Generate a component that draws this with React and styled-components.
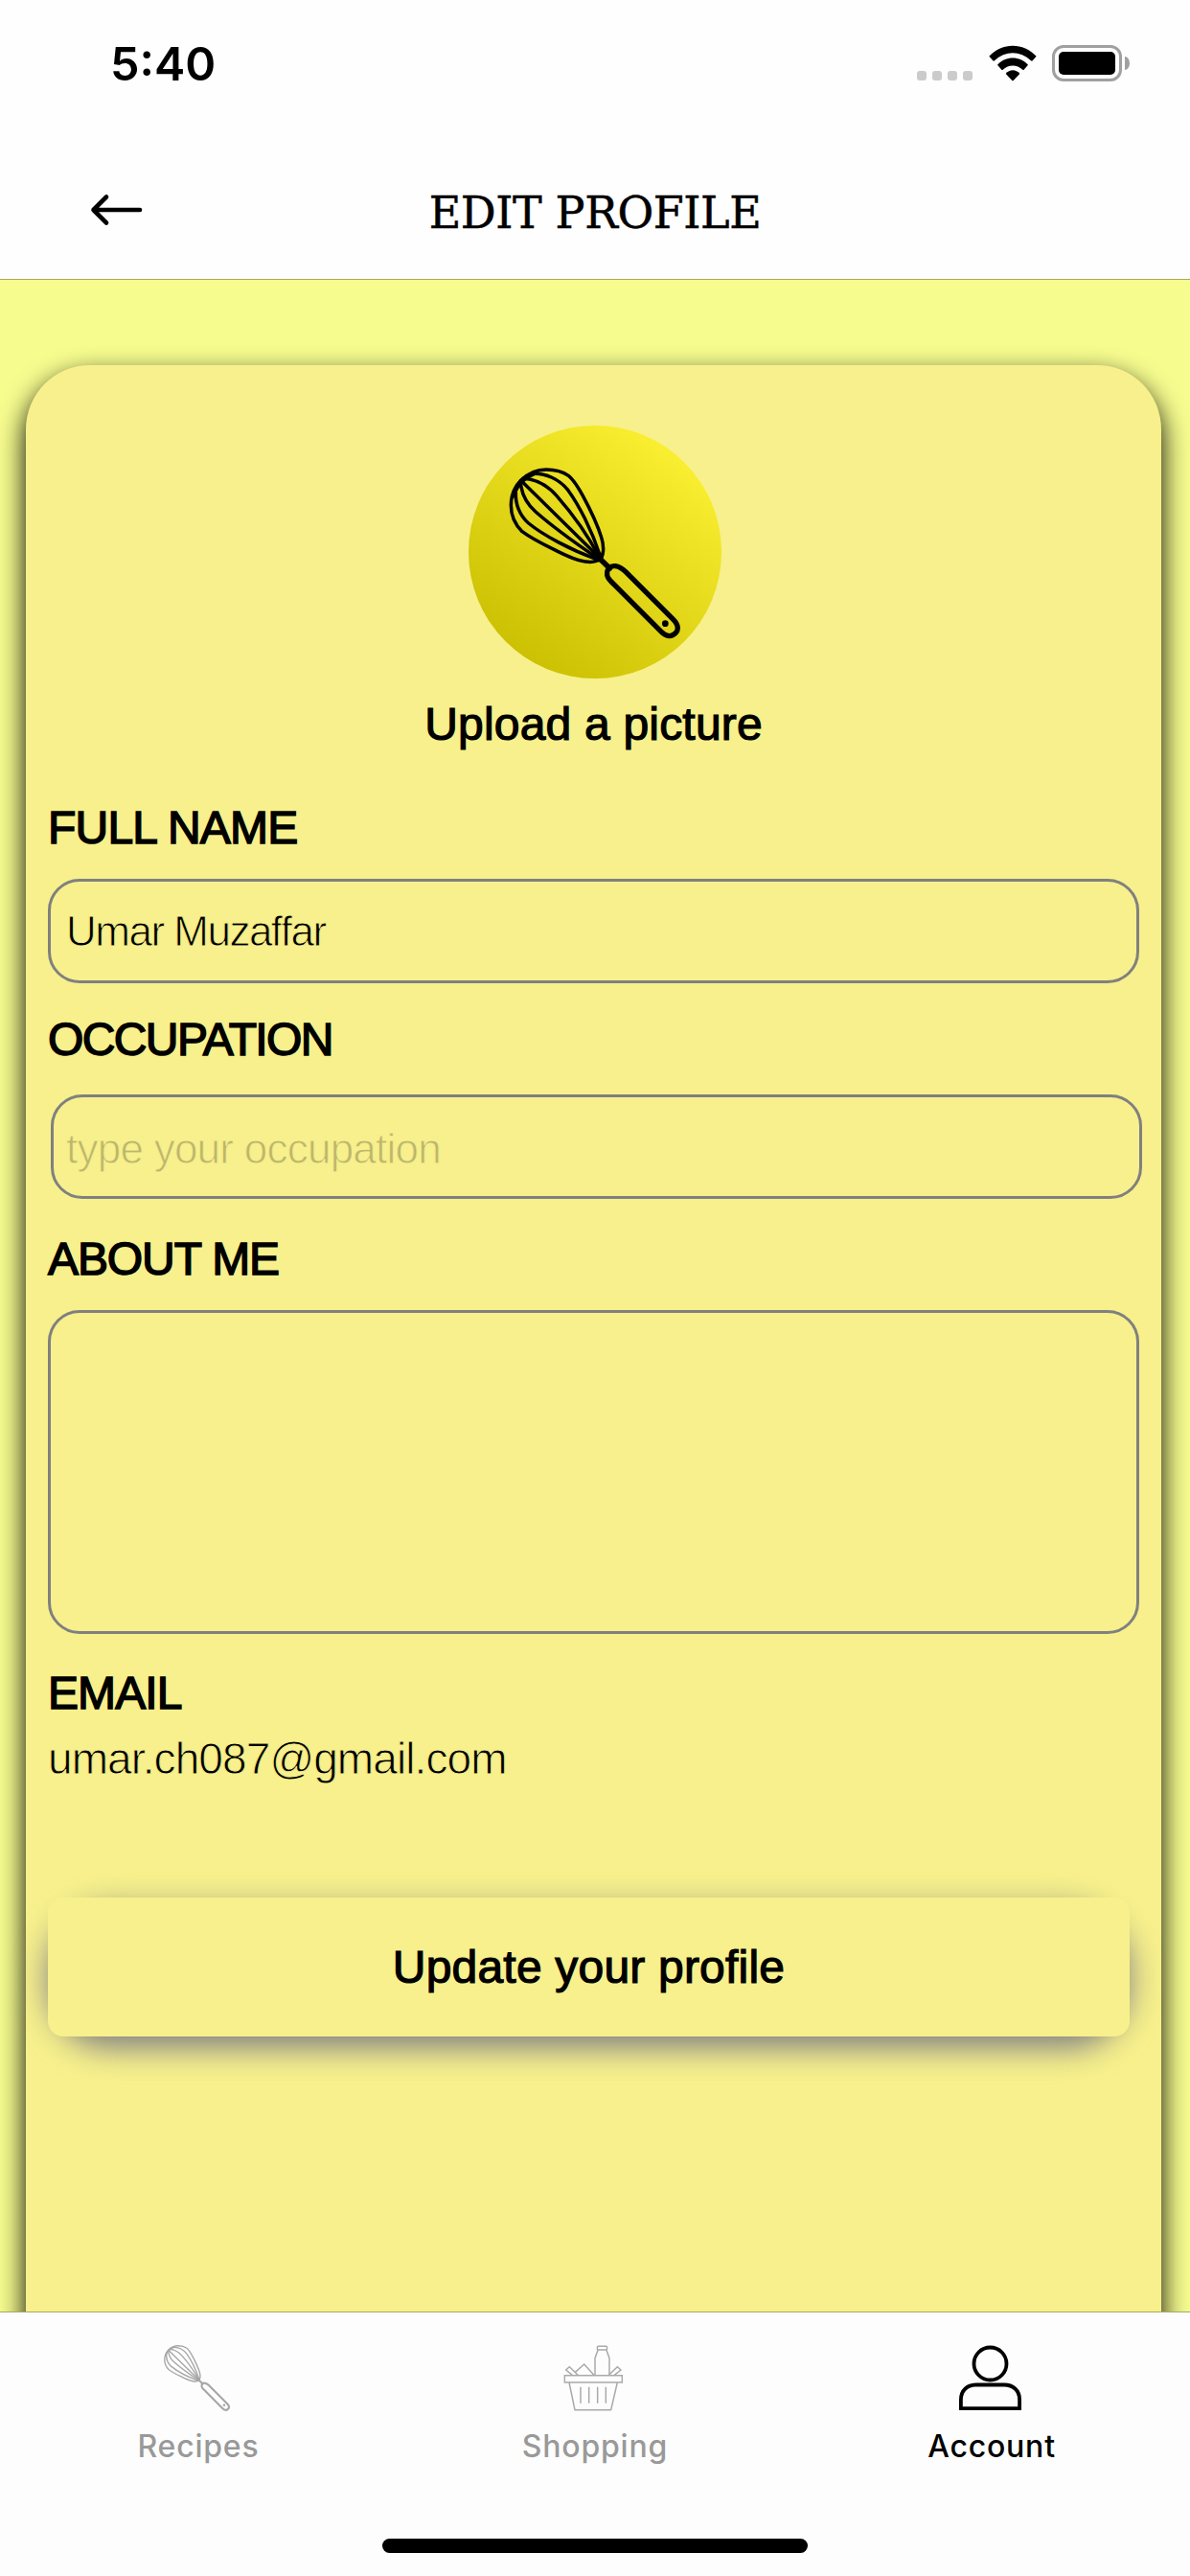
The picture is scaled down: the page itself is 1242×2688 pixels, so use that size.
import React from "react";
import styled, { createGlobalStyle } from "styled-components";

const colors = {
  page: "#f6fc8e",
  card: "#f7f08c",
  chrome: "#fdfdfd",
  hairline: "#a9a962",
  outline: "#808080",
  muted: "#999999",
};

const sans = `"Liberation Sans", Arial, sans-serif`;
const system = `Inter, "Liberation Sans", sans-serif`;

const GlobalStyle = createGlobalStyle`
  * { box-sizing: border-box; }
  body { margin: 0; background: ${colors.page}; }
`;

const Screen = styled.div`
  display: flex;
  flex-direction: column;
  width: 1242px;
  height: 2688px;
  overflow: hidden;
  background: ${colors.page};
  color: #000;
  font-family: ${sans};
`;

const TopBar = styled.header`
  flex: none;
  height: 292px;
  background: #fefefe;
  border-bottom: 1px solid ${colors.hairline};
`;

const StatusBar = styled.div`
  display: flex;
  justify-content: space-between;
  align-items: center;
  height: 132px;
  padding: 0 63px 0 115px;
`;

const Clock = styled.span`
  padding-top: 1px;
  font: 600 48.5px/60px ${system};
`;

const StatusIcons = styled.div`
  display: flex;
  align-items: flex-end;
`;

const SignalDots = styled.div`
  display: flex;
  gap: 6px;
  margin: 0 17px 1px 0;
`;

const Dot = styled.span`
  width: 10px;
  height: 10px;
  border-radius: 3px;
  background: #cbcbcb;
`;

const Battery = styled.div`
  width: 73px;
  height: 38px;
  margin-left: 16px;
  padding: 4px;
  border: 3px solid #a0a0a0;
  border-radius: 12px;
`;

const BatteryLevel = styled.div`
  width: 59px;
  height: 24px;
  border-radius: 5px;
  background: #000;
`;

const BatteryTip = styled.div`
  width: 5px;
  height: 14px;
  margin: 0 0 12px 3px;
  border-radius: 0 5px 5px 0 / 0 7px 7px 0;
  background: #a0a0a0;
`;

const NavRow = styled.div`
  display: grid;
  grid-template-columns: 300px 1fr 300px;
  align-items: center;
  height: 159px;
`;

const BackButton = styled.button`
  display: flex;
  width: 60px;
  height: 40px;
  margin: 15px 0 0 93px;
  padding: 0;
  border: 0;
  background: none;
`;

const Title = styled.h1`
  margin: 0;
  padding-top: 21px;
  text-align: center;
  font: 400 46px/60px "DejaVu Serif", serif;
  letter-spacing: -0.4px;
  white-space: nowrap;
  -webkit-text-stroke: 0.5px #000;
`;

const Content = styled.main`
  flex: 1;
  min-height: 0;
  overflow: hidden;
  padding: 89px 30px 0 27px;
`;

const Card = styled.form`
  display: flex;
  flex-direction: column;
  height: 2200px;
  padding: 63px 23px 0;
  border-radius: 67px 67px 0 0;
  background: ${colors.card};
  box-shadow: 0 12px 28px #000;
`;

const Avatar = styled.div`
  align-self: center;
  flex: none;
  width: 264px;
  height: 264px;
  margin-left: 3px;
  border-radius: 50%;
  background: linear-gradient(36deg, #c9be00 10%, #fcf132 90%);
`;

const Caption = styled.div`
  margin-top: 20px;
  text-align: center;
  font-size: 48px;
  line-height: 56px;
  letter-spacing: ${(p) => p.$spacing || 0}px;
  -webkit-text-stroke: 1.2px #000;
`;

const Label = styled.label`
  margin-top: ${(p) => p.$top}px;
  font-size: 48px;
  line-height: 56px;
  letter-spacing: ${(p) => p.$spacing || 0}px;
  -webkit-text-stroke: 1.5px #000;
`;

const TextField = styled.input`
  flex: none;
  width: 1139px;
  height: 109px;
  margin: ${(p) => p.$top}px 0 0 ${(p) => p.$left || 0}px;
  padding: ${(p) => p.$drop || 0}px 18px 0 ${(p) => 16 - (p.$left || 0)}px;
  border: 3px solid ${colors.outline};
  border-radius: 33px;
  background: none;
  color: #000;
  font: 400 44px ${sans};
  letter-spacing: ${(p) => p.$spacing || 0}px;
  -webkit-text-stroke: 0.9px ${colors.card};

  &::placeholder {
    color: #bdb66c;
    opacity: 1;
  }
`;

const TextBox = styled.textarea`
  flex: none;
  width: 1139px;
  height: 338px;
  margin: 25px 0 0;
  border: 3px solid ${colors.outline};
  border-radius: 33px;
  background: none;
  resize: none;
`;

const Email = styled.div`
  margin-top: 12px;
  font-size: 46px;
  line-height: 56px;
  letter-spacing: ${(p) => p.$spacing || 0}px;
  -webkit-text-stroke: 0.9px ${colors.card};
`;

const SubmitButton = styled.button`
  position: relative;
  z-index: 0;
  flex: none;
  width: 1129px;
  height: 145px;
  margin-top: 117px;
  padding: 0;
  border: 0;
  background: none;
  color: #000;
  font: 400 48px/56px ${sans};
  letter-spacing: ${(p) => p.$spacing || 0}px;
  -webkit-text-stroke: 1.2px #000;

  &::before,
  &::after {
    content: "";
    position: absolute;
    z-index: -1;
  }

  &::before {
    inset: 12px 0 -12px;
    border-radius: 64px;
    background: #808083;
    filter: blur(16px);
  }

  &::after {
    inset: 0;
    border-radius: 16px;
    background: ${colors.card};
  }
`;

const TabBar = styled.footer`
  flex: none;
  display: flex;
  flex-direction: column;
  align-items: center;
  height: 276px;
  background: ${colors.chrome};
  border-top: 1px solid ${colors.hairline};
`;

const Tabs = styled.nav`
  display: grid;
  grid-template-columns: repeat(3, 1fr);
  width: 100%;
  height: 236px;
  padding-top: 34px;
`;

const Tab = styled.a`
  display: flex;
  flex-direction: column;
  align-items: center;
  gap: 17px;
  color: ${(p) => (p.$active ? "#000" : colors.muted)};
  font: 500 32px/40px ${system};
  letter-spacing: 0.8px;

  svg {
    margin-right: 3px;
  }
`;

const HomeIndicator = styled.div`
  width: 444px;
  height: 15px;
  border-radius: 8px;
  background: #000;
`;

const WhiskIcon = ({ size, viewBox, color = "#000" }) => (
  <svg width={size} height={size} viewBox={viewBox} fill="none" stroke={color} strokeLinecap="round" strokeLinejoin="round">
    <g strokeWidth="10.5">
      <path d="M407 422C426 412 424 375 416 350C406 318 384 268 358 220C343 193 330 170 313 157C292 142 265 138 243 138C212 138 186 150 164 172C142 194 133 220 133 250C133 285 145 310 168 332C195 352 230 370 263 386C305 408 345 426 375 427C392 428 404 426 412 416" />
      <path d="M200 151C240 148 285 168 312 203C345 248 385 325 412 408" />
      <path d="M170 166C210 168 248 188 276 220C325 276 375 345 408 410" />
      <path d="M164 172L410 414" />
      <path d="M163 176C165 212 182 245 210 270C260 314 330 365 402 414" />
      <path d="M148 210C146 245 160 282 188 306C235 344 320 390 400 418" />
    </g>
    <path d="M142 220C148 190 170 165 208 149" strokeWidth="13" />
    <circle cx="407" cy="411" r="15" fill={color} stroke="none" />
    <path d="M404 410L442 447" strokeWidth="17" />
    <path
      d="M434 468C432 448 444 438 460 440C474 442 484 450 492 458L641 607C658 624 658 640 648 650C636 662 620 662 604 646L452 494C442 484 435 478 434 468Z"
      strokeWidth="16"
    />
    <circle cx="616" cy="620" r="10" fill={color} stroke="none" />
  </svg>
);

const BasketIcon = () => (
  <svg width="69" height="69" viewBox="44 51 207 207" fill="none" stroke="#a9a9a9" strokeWidth="4.4">
    <path d="M57 146H237V168H57Z" />
    <path d="M71 168L89 254H202L222 168" />
    <path d="M107 182V233M133 182V233M160 182V233M186 182V233" />
    <path d="M82 146L61 129L72 119L100 146" />
    <path d="M212 146L233 129L222 119L194 146" />
    <path d="M90 136L118 111L150 146" />
    <path d="M152 146V92L161 67C158 62 158 55 163 55H186C191 55 191 62 188 67L197 92V146M160 66H189" />
  </svg>
);

const PersonIcon = () => (
  <svg width="69" height="69" viewBox="0 0 69 69" fill="none" stroke="#000" strokeWidth="3.8">
    <circle cx="34.5" cy="19.5" r="17" />
    <path d="M3.9 66.2V57C3.9 47 11 41.5 20 41.5H49C58 41.5 65.1 47 65.1 57V66.2Z" />
  </svg>
);

const WifiIcon = () => (
  <svg width="50" height="38" viewBox="304 49 150 114">
    <path d="M305 84C346 40 412 40 453 84L441 98Q439 100 436 98C403 66 355 66 322 98Q319 100 317 98Z" />
    <path d="M331 111C357 82 401 82 427 111L414 126Q412 128 410 126C392 109 366 109 348 126Q346 128 344 126Z" />
    <path d="M357 139C369 124 389 124 401 139L381 160Q379 162 377 160Z" />
  </svg>
);

const BackIcon = () => (
  <svg width="60" height="40" viewBox="0 0 60 40" fill="none" stroke="#000" strokeWidth="4.6" strokeLinecap="round" strokeLinejoin="round">
    <path d="M53 20H4.5M18 6.5L4.5 20L18 33.5" />
  </svg>
);

export default function App() {
  return (
    <Screen>
      <GlobalStyle />
      <TopBar>
        <StatusBar>
          <Clock>5:40</Clock>
          <StatusIcons>
            <SignalDots>
              <Dot />
              <Dot />
              <Dot />
              <Dot />
            </SignalDots>
            <WifiIcon />
            <Battery>
              <BatteryLevel />
            </Battery>
            <BatteryTip />
          </StatusIcons>
        </StatusBar>
        <NavRow>
          <BackButton type="button" aria-label="Back">
            <BackIcon />
          </BackButton>
          <Title>EDIT PROFILE</Title>
        </NavRow>
      </TopBar>

      <Content>
        <Card>
          <Avatar>
            <WhiskIcon size={264} viewBox="0 0 792 792" />
          </Avatar>
          <Caption $spacing={0.2}>Upload a picture</Caption>

          <Label $top={52} $spacing={-0.8} htmlFor="name">FULL NAME</Label>
          <TextField id="name" $top={25} $spacing={-1.5} defaultValue="Umar Muzaffar" />

          <Label $top={31} $spacing={-1.6} htmlFor="occupation">OCCUPATION</Label>
          <TextField
            id="occupation"
            $top={29}
            $left={3}
            $drop={4}
            $spacing={-0.75}
            placeholder="type your occupation"
          />

          <Label $top={35} $spacing={-1.1} htmlFor="about">ABOUT ME</Label>
          <TextBox id="about" />

          <Label $top={34} $spacing={-0.9} as="div">EMAIL</Label>
          <Email $spacing={-0.9}>umar.ch087@gmail.com</Email>

          <SubmitButton type="button" $spacing={0.2}>Update your profile</SubmitButton>
        </Card>
      </Content>

      <TabBar>
        <Tabs>
          <Tab>
            <WhiskIcon size={69} viewBox="128 132 534 536" color="#a6a6a6" />
            Recipes
          </Tab>
          <Tab>
            <BasketIcon />
            Shopping
          </Tab>
          <Tab $active>
            <PersonIcon />
            Account
          </Tab>
        </Tabs>
        <HomeIndicator />
      </TabBar>
    </Screen>
  );
}
